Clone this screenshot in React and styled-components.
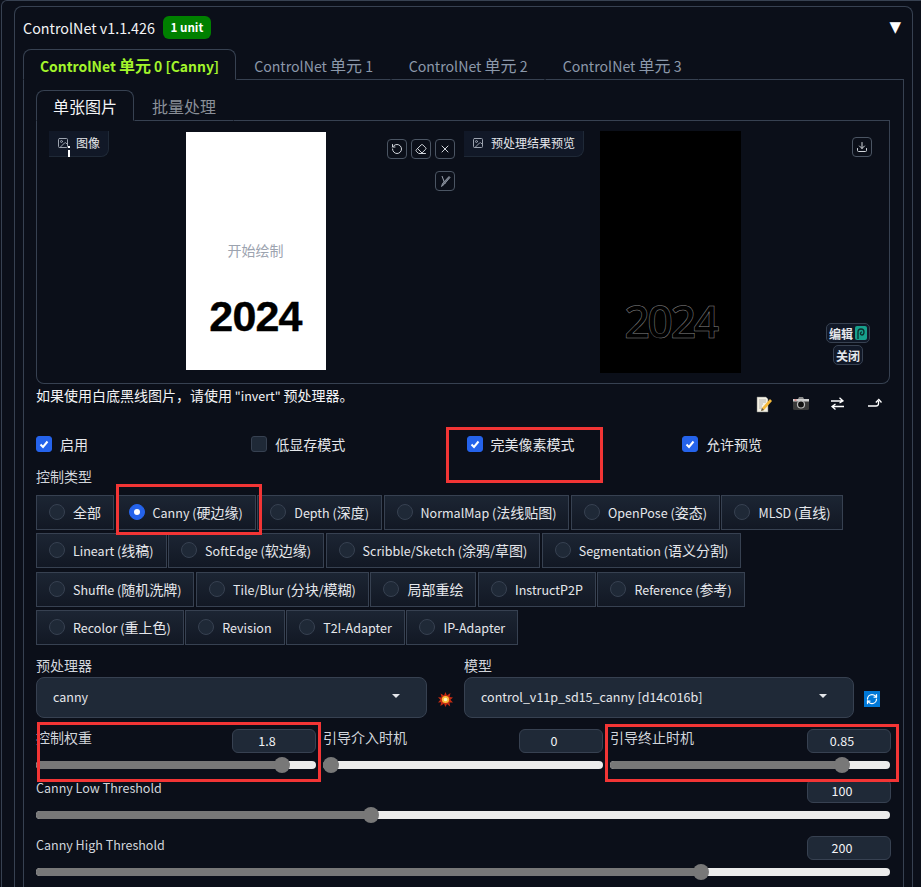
import styled, { createGlobalStyle } from "styled-components";
import { Image, Download, RotateCcw, Eraser, X, RefreshCw } from "lucide-react";

const FONT = `"Noto Sans CJK SC", "Noto Sans", sans-serif`;

const GlobalStyle = createGlobalStyle`
  html, body {
    margin: 0;
    height: 887px;
    overflow: hidden;
    background: #0b0f19;
    color: #e5e7eb;
    font-family: ${FONT};
    font-size: 14px;
  }
  * { box-sizing: border-box; }
`;

const Latin = styled.span`
  font-size: 0.895em;
`;

const Mix = ({ children }) =>
  children
    .split(/([\x20-\x7e]+)/)
    .map((part, i) => (/[\x20-\x7e]/.test(part) ? <Latin key={i}>{part}</Latin> : part));

const Page = styled.div`
  position: relative;
  height: 887px;
  margin-left: 1px;
  padding: 5px 8px 0 12px;
  border-left: 1px solid #374151;
  border-top: 1px solid #374151;
  border-top-left-radius: 6px;
`;

const Panel = styled.section`
  border: 1px solid #374151;
  border-bottom: none;
  border-radius: 8px 8px 0 0;
  padding: 0 8px;
`;

const Header = styled.header`
  display: flex;
  align-items: center;
  height: 42px;
  gap: 8px;
  padding-bottom: 2px;
`;

const Title = styled.span`
  font-size: 16px;
  color: #f3f4f6;
`;

const Badge = styled.span`
  display: flex;
  align-items: center;
  justify-content: center;
  width: 48px;
  height: 23px;
  border-radius: 6px;
  background: #008000;
  color: #fff;
  font-size: 13px;
  font-weight: 700;
`;

const Collapse = styled.span`
  margin-left: auto;
  margin-right: 3px;
  font-family: "DejaVu Sans", sans-serif;
  font-size: 15px;
  color: #fff;
`;

const TabNav = styled.nav`
  display: flex;
  height: ${(p) => p.$height}px;
`;

const Tab = styled.div`
  display: flex;
  align-items: center;
  padding: 0 ${(p) => p.$pad}px;
  font-size: 16px;
  white-space: nowrap;
  color: ${(p) => (p.$active ? p.$activeColor : p.$idleColor)};
  font-weight: ${(p) => (p.$bold ? 700 : 400)};
  border: 1px solid ${(p) => (p.$active ? "#374151" : "transparent")};
  border-bottom: 1px solid ${(p) => (p.$active ? "#0b0f19" : "#374151")};
  border-radius: ${(p) => (p.$active ? "8px 8px 0 0" : "0")};
  ${Latin} {
    font-size: ${(p) => (p.$bold ? 0.87 : 0.885)}em;
  }
`;

const TabFill = styled.div`
  flex: 1;
  border-bottom: 1px solid #374151;
`;

const TabBody = styled.div`
  border-left: 1px solid #374151;
  border-right: 1px solid #374151;
  padding: 10px 13px 0 12px;
  height: 808px;
`;

const ImageBox = styled.div`
  display: grid;
  grid-template-columns: 427px 1fr;
  height: 263px;
  border: 1px solid #374151;
  border-top: none;
  border-radius: 0 0 8px 8px;
`;

const ImagePane = styled.div`
  position: relative;
  display: flex;
  justify-content: center;
  padding: ${(p) => p.$pad};
`;

const PaneTag = styled.div`
  position: absolute;
  top: 10px;
  left: ${(p) => p.$left}px;
  display: flex;
  align-items: center;
  gap: 7px;
  height: 26px;
  padding: 0 8px 2px;
  background: #111827;
  border: 1px solid #1f2937;
  border-top: none;
  border-left: none;
  border-radius: 0 0 8px 0;
  font-size: 12px;
  color: #e5e7eb;
  svg { color: #9ca3af; }
`;

const CursorMark = styled.i`
  position: absolute;
  left: 19px;
  top: 19px;
  width: 2px;
  height: 7px;
  background: #fff;
  &::before {
    content: "";
    position: absolute;
    left: 0;
    top: -4px;
    width: 2px;
    height: 2px;
    background: #fff;
  }
`;

const WhiteCanvas = styled.div`
  display: flex;
  flex-direction: column;
  align-items: center;
  width: 140px;
  height: 238px;
  background: #fff;
  padding-top: 108px;
`;

const Placeholder = styled.span`
  font-size: 14px;
  line-height: 20px;
  color: #9ca3af;
`;

const CanvasYear = styled.span`
  margin-top: 28px;
  font-family: "Liberation Sans", sans-serif;
  font-size: 43px;
  line-height: 56px;
  letter-spacing: -0.8px;
  font-weight: 700;
  color: #000;
  -webkit-text-stroke: 0.4px #000;
`;

const BlackCanvas = styled.div`
  display: flex;
  justify-content: center;
  width: 141px;
  height: 242px;
  background: #000;
  padding-top: 160px;
`;

const OutlineYear = styled.span`
  font-family: "Open Sans", sans-serif;
  font-size: 45px;
  line-height: 60px;
  letter-spacing: -2.6px;
  font-weight: 600;
  color: #000;
  -webkit-text-stroke: 0.5px #8a8a8a;
`;

const ToolGroup = styled.div`
  position: absolute;
  top: ${(p) => p.$top}px;
  right: ${(p) => p.$right}px;
  display: flex;
  gap: 4px;
`;

const ToolButton = styled.button`
  display: flex;
  align-items: center;
  justify-content: center;
  width: 20px;
  height: 20px;
  padding: 0;
  background: #0b0f19;
  border: 1px solid #4b5563;
  border-radius: 4px;
  color: #d1d5db;
`;

const OverlayButtons = styled.div`
  position: absolute;
  top: 202px;
  right: 19px;
  display: flex;
  flex-direction: column;
  align-items: center;
  gap: 2px;
`;

const SmallButton = styled.div`
  display: flex;
  align-items: center;
  gap: 2px;
  height: 20px;
  padding: 0 2px;
  background: #111827;
  border: 1px solid #374151;
  border-radius: 5px;
  font-size: 12px;
  font-weight: 700;
  color: #e5e7eb;
`;

const HintRow = styled.div`
  display: flex;
  justify-content: space-between;
  height: 49px;
`;

const Hint = styled.p`
  margin: 1px 0 0;
  font-size: 14px;
  line-height: 20px;
  color: #f3f4f6;
`;

const EmojiRow = styled.div`
  display: flex;
  margin-right: -3px;
  padding-top: 12px;
`;

const EmojiCell = styled.span`
  display: flex;
  justify-content: center;
  width: 37px;
  height: 18px;
`;

const CheckGrid = styled.div`
  display: grid;
  grid-template-columns: repeat(4, 215.3px);
  height: 22px;
`;

const CheckItem = styled.label`
  display: flex;
  align-items: center;
  gap: 8px;
  font-size: 14px;
  color: #e5e7eb;
`;

const CheckBox = styled.span`
  display: flex;
  align-items: center;
  justify-content: center;
  width: 16px;
  height: 16px;
  border-radius: 3px;
  background: ${(p) => (p.$on ? "#2563eb" : "#1f2937")};
  border: 1px solid ${(p) => (p.$on ? "#2563eb" : "#374151")};
`;

const FieldLabel = styled.div`
  font-size: 14px;
  line-height: 20px;
  color: #d1d5db;
`;

const TypeLabel = styled(FieldLabel)`
  margin: 11px 0 9px;
`;

const RadioGroup = styled.div`
  display: flex;
  flex-wrap: wrap;
  gap: 3.33px 1.6px;
`;

const RadioItem = styled.label`
  display: flex;
  align-items: center;
  gap: 8px;
  height: 35px;
  padding: 0 12px 1px;
  background: linear-gradient(to bottom, #1c2533, #121824);
  border: 1px solid #374151;
  font-size: 14px;
  color: #e5e7eb;
  white-space: nowrap;
`;

const RadioText = styled.span``;

const RadioDot = styled.span`
  display: flex;
  align-items: center;
  justify-content: center;
  width: 16px;
  height: 16px;
  border-radius: 50%;
  background: ${(p) => (p.$on ? "#2563eb" : "#1f2937")};
  border: 1px solid ${(p) => (p.$on ? "#2563eb" : "#374151")};
  &::after {
    content: "";
    display: ${(p) => (p.$on ? "block" : "none")};
    width: 6px;
    height: 6px;
    border-radius: 50%;
    background: #fff;
  }
`;

const SelectRow = styled.div`
  display: grid;
  grid-template-columns: 391px 37px 390px 36px;
  margin-top: 10px;
`;

const SelectField = styled.div`
  display: flex;
  flex-direction: column;
  gap: 2px;
`;

const SelectBox = styled.div`
  display: flex;
  align-items: center;
  justify-content: space-between;
  height: 41px;
  padding: 0 26px 2px 16px;
  background: #1f2937;
  border: 1px solid #374151;
  border-radius: 8px;
  font-size: 14px;
  color: #e5e7eb;
  &::after {
    content: "";
    border-left: 4px solid transparent;
    border-right: 4px solid transparent;
    border-top: 4px solid #e5e7eb;
  }
`;

const SelectSide = styled.div`
  display: flex;
  align-items: flex-end;
  justify-content: center;
  padding-bottom: 11px;
`;

const RefreshBox = styled.span`
  display: flex;
  align-items: center;
  justify-content: center;
  width: 16px;
  height: 16px;
  background: #0078d7;
  color: #fff;
`;

const SliderTriple = styled.div`
  display: grid;
  grid-template-columns: repeat(3, 280px);
  gap: 7px;
  margin-top: 11px;
`;

const SliderBlock = styled.div`
  margin-bottom: ${(p) => p.$below}px;
`;

const SliderHead = styled.div`
  display: flex;
  justify-content: space-between;
  align-items: flex-start;
  margin-right: ${(p) => (p.$edge ? -1 : 0)}px;
`;

const SliderName = styled.span`
  font-size: 14px;
  line-height: 16px;
  color: #d1d5db;
`;

const NumberBox = styled.div`
  display: flex;
  align-items: center;
  justify-content: center;
  width: 84px;
  height: 24px;
  padding-right: 14px;
  background: #1f2937;
  border: 1px solid #374151;
  border-radius: 6px;
  font-size: 14px;
  color: #f3f4f6;
`;

const Track = styled.div`
  position: relative;
  height: 8px;
  margin-top: ${(p) => p.$top}px;
  border-radius: 4px;
  background: #ececec;
`;

const TrackFill = styled.div`
  height: 8px;
  border-radius: 4px;
  background: #787878;
  width: calc(8px + ${(p) => p.$v} * (100% - 16px));
`;

const Thumb = styled.span`
  position: absolute;
  top: -4px;
  left: calc(${(p) => p.$v} * (100% - 16px));
  width: 16px;
  height: 16px;
  border-radius: 50%;
  background: #787878;
`;

const Mark = styled.div`
  position: absolute;
  left: ${(p) => p.$x}px;
  top: ${(p) => p.$y}px;
  width: ${(p) => p.$w}px;
  height: ${(p) => p.$h}px;
  border: 3px solid #f33535;
  pointer-events: none;
`;

const Slider = ({ name, value, ratio, top = 8, below = 0, edge = false }) => (
  <SliderBlock $below={below}>
    <SliderHead $edge={edge}>
      <SliderName><Mix>{name}</Mix></SliderName>
      <NumberBox><Mix>{value}</Mix></NumberBox>
    </SliderHead>
    <Track $top={top}>
      <TrackFill $v={ratio} />
      <Thumb $v={ratio} />
    </Track>
  </SliderBlock>
);

const NoteIcon = () => (
  <svg width="17" height="17" viewBox="0 0 17 17">
    <path d="M2 1h9l2 2v13H2z" fill="#f4f1e4" stroke="#777" strokeWidth=".5" />
    <path d="M4 4h7M4 6h7M4 8h4M4 10h3M4 12h3" stroke="#999" strokeWidth=".7" />
    <path d="M15 3L7 12l-1 3 3-1 8-9z" fill="#f5b93a" />
    <path d="M6 15l1-3 2 2z" fill="#555" />
  </svg>
);

const CameraIcon = () => (
  <svg width="18" height="15" viewBox="0 0 18 15">
    <rect x="1" y="3" width="16" height="11" rx="1.5" fill="#3a3a3a" />
    <path d="M1 3h16v2.5H1z" fill="#cfcfcf" />
    <path d="M6 3l1-2h4l1 2z" fill="#8a8a8a" />
    <circle cx="9" cy="8.5" r="3.5" fill="#111" stroke="#bbb" strokeWidth="1.2" />
    <rect x="2.5" y="3.4" width="2" height="1.2" fill="#d66" />
  </svg>
);

const SwapIcon = () => (
  <svg width="15" height="15" viewBox="0 0 15 15" fill="none" stroke="#fff" strokeWidth="1.3">
    <path d="M1 5h12M9.5 1.8L13 5l-3.5 2" />
    <path d="M14 10.5H2M5.5 8L2 10.5l3.5 3" />
  </svg>
);

const ReturnIcon = () => (
  <svg width="16" height="15" viewBox="0 0 16 15" fill="none" stroke="#fff" strokeWidth="1.3">
    <path d="M1 10h8c1.6 0 2.5-1 2.5-2.5V5" />
    <path d="M8.8 6.5L11.8 3.5l2.7 3" />
  </svg>
);

const BurstIcon = () => (
  <svg width="15" height="15" viewBox="0 0 15 15">
    <path d="M7.5 0l1.4 3.6L12.5 1l-1 4 3.5.6-2.6 2.2 2.6 2.7-3.6-.1.8 4-3.2-2.4-1.6 3-1.4-3.2L2.4 14l.7-3.8L0 10.4l2.4-2.7L0 5.2l3.6.2L2.6 1.4l3.4 2.2z" fill="#c62b12" />
    <circle cx="7.5" cy="7.5" r="3.6" fill="#fbbf3c" />
    <circle cx="7.5" cy="7.5" r="1.8" fill="#fff3c4" />
  </svg>
);

const SpiralIcon = () => (
  <svg width="12" height="14" viewBox="0 0 12 14">
    <rect width="12" height="14" rx="2" fill="#17a08c" />
    <path d="M3 13V6a3 3 0 0 1 6 0c0 2-1 3-2.2 3-1 0-1.4-.7-1.4-1.4S6 6 6.8 6" fill="none" stroke="#0b2f2e" strokeWidth="1.3" />
  </svg>
);

const BrushIcon = () => (
  <svg width="14" height="14" viewBox="0 0 14 14" fill="none" stroke="#9ca3af">
    <path d="M4 2l3 8" strokeWidth="1" />
    <path d="M3.5 12.5l1-3L11 2.5l1 1-6 7z" fill="#6b7280" strokeWidth=".8" />
  </svg>
);

const TICK = (
  <svg width="12" height="12" viewBox="0 0 12 12" fill="none" stroke="#fff" strokeWidth="2">
    <path d="M2.5 6.5l2.5 2.5 4.5-5.5" />
  </svg>
);

const CHECKS = [
  { label: "启用", on: true },
  { label: "低显存模式", on: false },
  { label: "完美像素模式", on: true },
  { label: "允许预览", on: true },
];

const TYPES = [
  "全部", "Canny (硬边缘)", "Depth (深度)", "NormalMap (法线贴图)", "OpenPose (姿态)", "MLSD (直线)",
  "Lineart (线稿)", "SoftEdge (软边缘)", "Scribble/Sketch (涂鸦/草图)", "Segmentation (语义分割)",
  "Shuffle (随机洗牌)", "Tile/Blur (分块/模糊)", "局部重绘", "InstructP2P", "Reference (参考)",
  "Recolor (重上色)", "Revision", "T2I-Adapter", "IP-Adapter",
];

export default function App() {
  return (
    <>
      <GlobalStyle />
      <Page>
        <Panel>
          <Header>
            <Title><Mix>ControlNet v1.1.426</Mix></Title>
            <Badge><Mix>1 unit</Mix></Badge>
            <Collapse>▼</Collapse>
          </Header>
          <TabNav $height={31}>
            <Tab $pad={16} $active $bold $activeColor="#a3f52b"><span><Mix>ControlNet 单元 0 [Canny]</Mix></span></Tab>
            <Tab $pad={17} $idleColor="#8b98aa"><span><Mix>ControlNet 单元 1</Mix></span></Tab>
            <Tab $pad={16.5} $idleColor="#8b98aa"><span><Mix>ControlNet 单元 2</Mix></span></Tab>
            <Tab $pad={16.5} $idleColor="#8b98aa"><span><Mix>ControlNet 单元 3</Mix></span></Tab>
            <TabFill />
          </TabNav>
          <TabBody>
            <TabNav $height={31}>
              <Tab $pad={16} $active $activeColor="#f3f4f6">单张图片</Tab>
              <Tab $pad={17} $idleColor="#8a8f98">批量处理</Tab>
              <TabFill />
            </TabNav>
            <ImageBox>
              <ImagePane $pad="11px 0 0 10px">
                <PaneTag $left={12}>
                  <Image size={12} />
                  图像
                  <CursorMark />
                </PaneTag>
                <WhiteCanvas>
                  <Placeholder>开始绘制</Placeholder>
                  <CanvasYear>2024</CanvasYear>
                </WhiteCanvas>
                <ToolGroup $top={18} $right={9}>
                  <ToolButton><RotateCcw size={12} /></ToolButton>
                  <ToolButton><Eraser size={12} /></ToolButton>
                  <ToolButton><X size={12} /></ToolButton>
                </ToolGroup>
                <ToolGroup $top={50} $right={9}>
                  <ToolButton><BrushIcon /></ToolButton>
                </ToolGroup>
              </ImagePane>
              <ImagePane $pad="10px 12px 0 0">
                <PaneTag $left={0}>
                  <Image size={12} />
                  预处理结果预览
                </PaneTag>
                <BlackCanvas>
                  <OutlineYear>2024</OutlineYear>
                </BlackCanvas>
                <ToolGroup $top={16} $right={17}>
                  <ToolButton><Download size={12} /></ToolButton>
                </ToolGroup>
                <OverlayButtons>
                  <SmallButton>编辑<SpiralIcon /></SmallButton>
                  <SmallButton>关闭</SmallButton>
                </OverlayButtons>
              </ImagePane>
            </ImageBox>
            <HintRow>
              <Hint><Mix>如果使用白底黑线图片，请使用 "invert" 预处理器。</Mix></Hint>
              <EmojiRow>
                <EmojiCell><NoteIcon /></EmojiCell>
                <EmojiCell><CameraIcon /></EmojiCell>
                <EmojiCell><SwapIcon /></EmojiCell>
                <EmojiCell><ReturnIcon /></EmojiCell>
              </EmojiRow>
            </HintRow>
            <CheckGrid>
              {CHECKS.map((c) => (
                <CheckItem key={c.label}>
                  <CheckBox $on={c.on}>{c.on && TICK}</CheckBox>
                  {c.label}
                </CheckItem>
              ))}
            </CheckGrid>
            <TypeLabel>控制类型</TypeLabel>
            <RadioGroup>
              {TYPES.map((t) => (
                <RadioItem key={t}>
                  <RadioDot $on={t.startsWith("Canny")} />
                  <RadioText><Mix>{t}</Mix></RadioText>
                </RadioItem>
              ))}
            </RadioGroup>
            <SelectRow>
              <SelectField>
                <FieldLabel>预处理器</FieldLabel>
                <SelectBox><span><Mix>canny</Mix></span></SelectBox>
              </SelectField>
              <SelectSide><BurstIcon /></SelectSide>
              <SelectField>
                <FieldLabel>模型</FieldLabel>
                <SelectBox><span><Mix>control_v11p_sd15_canny [d14c016b]</Mix></span></SelectBox>
              </SelectField>
              <SelectSide>
                <RefreshBox><RefreshCw size={12} strokeWidth={2.5} /></RefreshBox>
              </SelectSide>
            </SelectRow>
            <SliderTriple>
              <Slider name="控制权重" value="1.8" ratio={0.9} below={10} />
              <Slider name="引导介入时机" value="0" ratio={0} below={10} />
              <Slider name="引导终止时机" value="0.85" ratio={0.85} below={10} edge />
            </SliderTriple>
            <Slider name="Canny Low Threshold" value="100" ratio={0.39} below={17} edge />
            <Slider name="Canny High Threshold" value="200" ratio={0.784} edge />
          </TabBody>
        </Panel>
        <Mark $x={444} $y={426} $w={157} $h={56} />
        <Mark $x={114} $y={483} $w={146} $h={51} />
        <Mark $x={35} $y={721} $w={284} $h={60} />
        <Mark $x={603} $y={723} $w={294} $h={58} />
      </Page>
    </>
  );
}
